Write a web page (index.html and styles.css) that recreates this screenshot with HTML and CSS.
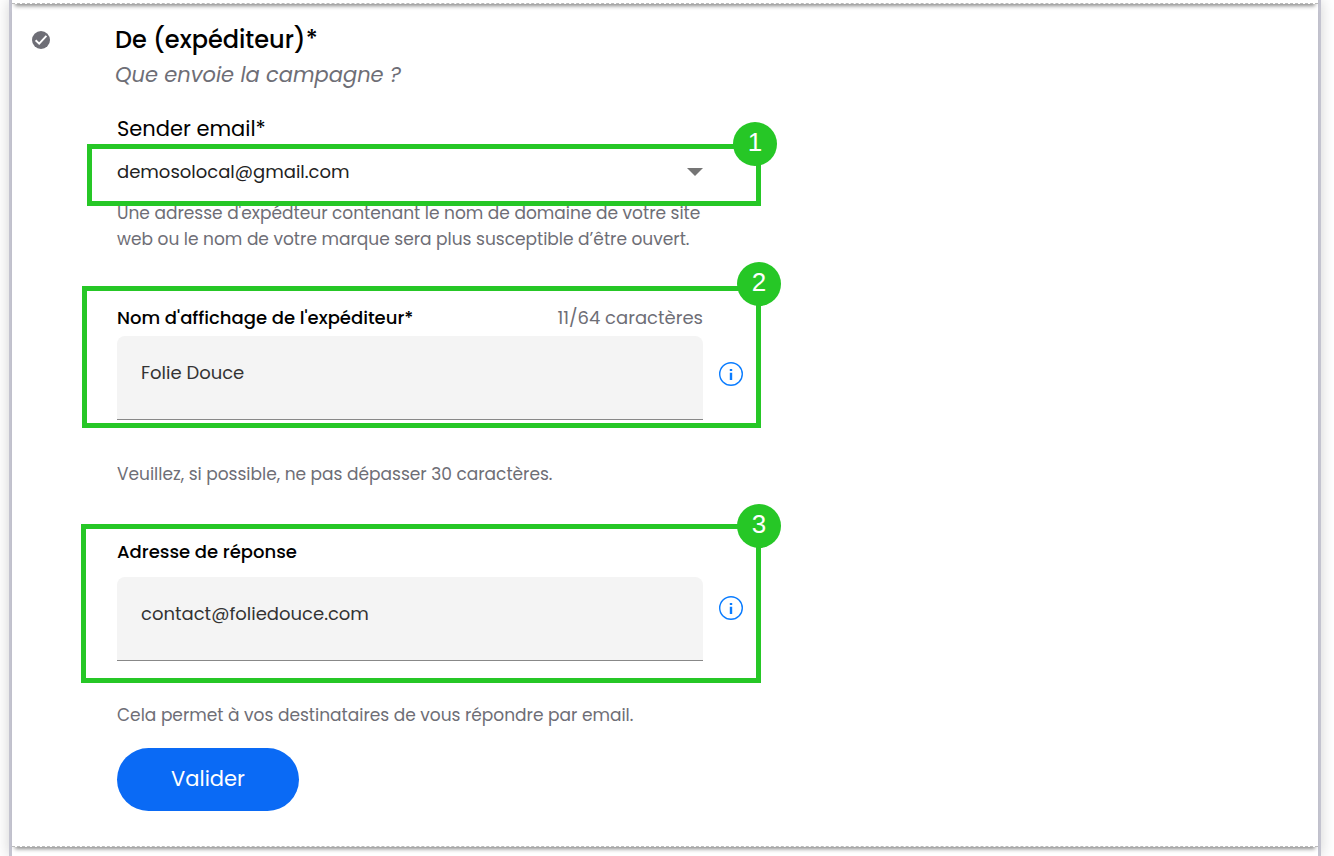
FILE: index.html
```html
<!DOCTYPE html>
<html lang="fr">
<head>
    <meta charset="UTF-8">
    <meta name="viewport" content="width=device-width, initial-scale=1.0">
    <title>Campagne - Expéditeur</title>
    <link rel="stylesheet" href="styles.css">
</head>
<body>
    <main class="panel">
        <div class="step step-previous"></div>

        <section class="step step-sender">
            <svg class="step-check" viewBox="0 0 18 18" aria-hidden="true">
                <circle cx="9" cy="9" r="9" fill="#6e6e76"/>
                <path d="M3.6 9.2l3.6 3.5 7.2-7.9" fill="none" stroke="#fff" stroke-width="1.9"/>
            </svg>

            <form class="sender-form">
                <h2 class="step-title">De (expéditeur)*</h2>
                <p class="step-subtitle">Que envoie la campagne ?</p>

                <!-- Email expéditeur -->
                <div class="field field-email">
                    <label class="label label-large" for="senderEmail">Sender email*</label>
                    <div class="select-wrap">
                        <select class="select" id="senderEmail">
                            <option>demosolocal@gmail.com</option>
                        </select>
                        <svg class="select-arrow" viewBox="0 0 16 8" aria-hidden="true">
                            <path d="M0 0h16L8 8z" fill="#757575"/>
                        </svg>
                    </div>
                    <p class="help">Une adresse d'expédteur contenant le nom de domaine de votre site web ou le nom de votre marque sera plus susceptible d’être ouvert.</p>
                    <div class="highlight"><span class="badge">1</span></div>
                </div>

                <!-- Nom d'affichage -->
                <div class="field field-name">
                    <div class="label-row">
                        <label class="label" for="senderName">Nom d'affichage de l'expéditeur*</label>
                        <span class="counter">11/64 caractères</span>
                    </div>
                    <div class="input-row">
                        <input class="input" id="senderName" type="text" value="Folie Douce">
                        <svg class="info" viewBox="0 0 24 24" aria-hidden="true">
                            <circle cx="12" cy="12" r="11.3"/>
                            <path d="M10.8 7h2.4v2h-2.4zM10.8 10.7h2.4v7.3h-2.4z"/>
                        </svg>
                    </div>
                    <p class="help">Veuillez, si possible, ne pas dépasser 30 caractères.</p>
                    <div class="highlight"><span class="badge">2</span></div>
                </div>

                <!-- Adresse de réponse -->
                <div class="field field-reply">
                    <label class="label" for="replyEmail">Adresse de réponse</label>
                    <div class="input-row">
                        <input class="input" id="replyEmail" type="email" value="contact@foliedouce.com">
                        <svg class="info" viewBox="0 0 24 24" aria-hidden="true">
                            <circle cx="12" cy="12" r="11.3"/>
                            <path d="M10.8 7h2.4v2h-2.4zM10.8 10.7h2.4v7.3h-2.4z"/>
                        </svg>
                    </div>
                    <p class="help">Cela permet à vos destinataires de vous répondre par email.</p>
                    <div class="highlight"><span class="badge">3</span></div>
                </div>

                <button class="submit" type="button">Valider</button>
            </form>
        </section>
    </main>
</body>
</html>
```
FILE: styles.css
```css
:root {
    --blue: #0a6af5;
    --info: #0a7cff;
    --green: #26c726;
    --grey: #6e6e76;
    --frame: #c4c4d0;
}

* {
    box-sizing: border-box;
}

body {
    margin: 0;
    font-family: Poppins, Inter, sans-serif;
    color: #000;
    background: #fff;
}

.panel {
    display: flow-root;
    min-height: 100vh;
    margin: 0 13px 0 9px;
    border: solid var(--frame);
    border-width: 0 3px;
    box-shadow: 0 0 14px rgba(0, 0, 0, 0.18);
}

.step {
    border-bottom: 1px dashed #bbb;
    box-shadow: 0 5px 4px -3px rgba(0, 0, 0, 0.45);
}

/* seul le bas de l'étape précédente est visible */
.step-previous {
    height: 40px;
    margin-top: -36px;
}

.step-sender {
    display: flex;
    gap: 65px;
    padding: 18px 20px 35px;
}

.step-check {
    flex: none;
    width: 18px;
    height: 18px;
    margin-top: 9px;
}

.sender-form {
    flex: 1;
    max-width: 628px;
}

.step-title {
    margin: 0;
    font-size: 24px;
    font-weight: 500;
    line-height: 36px;
}

.step-subtitle {
    margin: 0 0 22px;
    color: var(--grey);
    font-size: 21px;
    font-style: italic;
    line-height: 34px;
}

/* Champs */
.field {
    position: relative;
    padding-left: 2px;
}

.label {
    display: block;
    font-size: 18px;
    font-weight: 500;
    line-height: 30px;
}

.label-large {
    font-size: 21px;
    font-weight: 400;
}

.label-row {
    display: flex;
    justify-content: space-between;
    max-width: 586px;
    margin-bottom: 3px;
}

.counter {
    color: var(--grey);
    font-size: 18px;
    line-height: 30px;
}

.help {
    max-width: 586px;
    margin: 0;
    color: var(--grey);
    font-size: 17px;
    line-height: 26px;
}

.select-wrap {
    position: relative;
    max-width: 586px;
    margin-bottom: 2px;
}

.select {
    width: 100%;
    height: 54px;
    padding: 0 24px 0 0;
    border: 0;
    background: none;
    color: #222;
    font: inherit;
    font-size: 18px;
    appearance: none;
}

.select-arrow {
    position: absolute;
    top: 24px;
    right: 0;
    width: 16px;
    height: 8px;
    pointer-events: none;
}

.input-row {
    display: flex;
    align-items: flex-start;
    gap: 16px;
}

.input {
    flex: 1;
    min-width: 0;
    height: 84px;
    padding: 0 24px 10px;
    border: 0;
    border-bottom: 1px solid #888;
    border-radius: 8px 8px 0 0;
    background: #f4f4f4;
    color: #333;
    font: inherit;
    font-size: 18px;
}

.info {
    flex: none;
    width: 24px;
    height: 24px;
    margin-top: 26px;
}

.info circle {
    fill: none;
    stroke: var(--info);
    stroke-width: 1.4;
}

.info path {
    fill: var(--info);
}

.field-name {
    margin-top: 51px;
}

.field-name .help,
.field-reply .help {
    margin-top: 41px;
}

.field-reply {
    margin-top: 50px;
}

.field-reply .label {
    margin-bottom: 10px;
}

.field-reply .info {
    margin-top: 19px;
}

/* Cadres numérotés */
.highlight {
    position: absolute;
    right: -18px;
    border: 5px solid var(--green);
    pointer-events: none;
}

.field-email .highlight {
    top: 30px;
    left: -28px;
    height: 62px;
}

.field-name .highlight {
    top: -17px;
    left: -33px;
    height: 142px;
}

.field-reply .highlight {
    top: -13px;
    left: -34px;
    height: 159px;
}

.badge {
    position: absolute;
    top: -27px;
    right: -25px;
    width: 44px;
    height: 44px;
    border-radius: 50%;
    background: var(--green);
    color: #fff;
    font-family: "Liberation Sans", Arial, sans-serif;
    font-size: 26px;
    line-height: 40px;
    text-align: center;
}

.field-email .badge {
    right: -21px;
}

.field-name .badge {
    top: -29px;
}

.field-reply .badge {
    top: -25px;
}

.submit {
    display: block;
    width: 182px;
    height: 63px;
    margin: 20px 0 0 2px;
    padding: 0 0 2px;
    border: 0;
    border-radius: 32px;
    background: var(--blue);
    color: #fff;
    font: inherit;
    font-size: 21px;
    cursor: pointer;
}
```
